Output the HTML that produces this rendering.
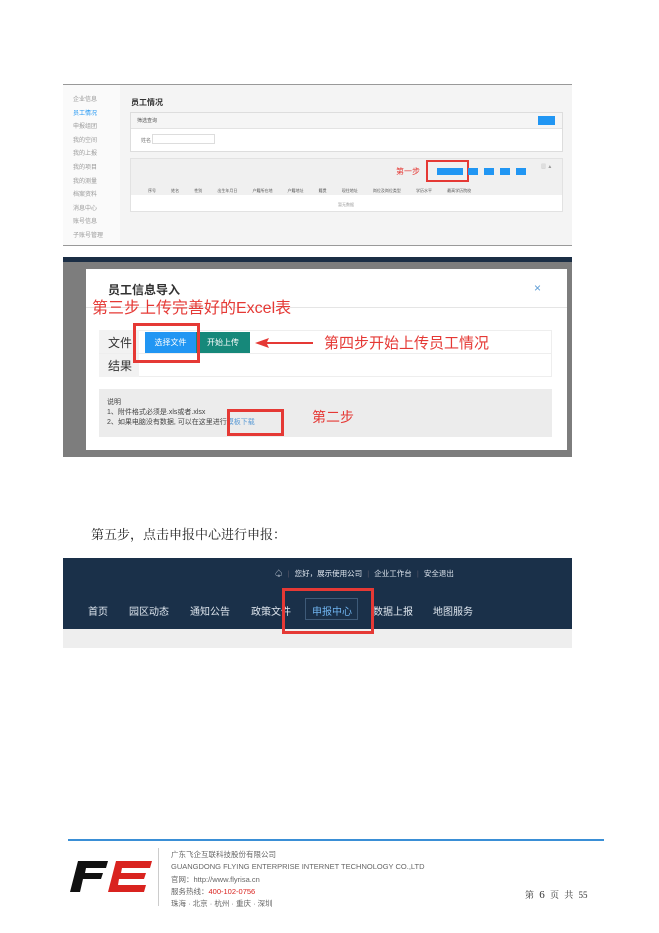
<!DOCTYPE html>
<html><head><meta charset="utf-8"><style>
*{margin:0;padding:0;box-sizing:border-box}
body{width:659px;height:933px;background:#fff;position:relative;overflow:hidden;font-family:"Liberation Sans","Noto Sans CJK SC",sans-serif}
.a{position:absolute;white-space:nowrap}
</style></head><body>

<!-- screenshot 1 -->
<div class="a" style="left:63px;top:84px;width:509px;height:162px;background:#f4f4f4;border-top:1px solid #999;border-bottom:1px solid #999"></div>
<div class="a" style="left:63px;top:85px;width:57px;height:160px;background:#fafafa"></div>
<div class="a" style="left:73px;top:94px;font-size:6px;line-height:13.6px;color:#999">企业信息<br><span style="color:#2196f3">员工情况</span><br>申报组团<br>我的空间<br>我的上报<br>我的项目<br>我的测量<br>档案资料<br>消息中心<br>账号信息<br>子账号管理</div>
<div class="a" style="left:131px;top:97px;font-size:8px;font-weight:bold;color:#333">员工情况</div>
<div class="a" style="left:130px;top:112px;width:433px;height:40px;background:#fff;border:1px solid #ddd"></div>
<div class="a" style="left:131px;top:113px;width:431px;height:16px;background:#f5f5f5;border-bottom:1px solid #e3e3e3"></div>
<div class="a" style="left:137px;top:117px;font-size:5px;color:#555">筛选查询</div>
<div class="a" style="left:538px;top:116px;width:17px;height:9px;background:#2196f3"></div>
<div class="a" style="left:141px;top:137px;font-size:5px;color:#777">姓名</div>
<div class="a" style="left:152px;top:134px;width:63px;height:10px;border:1px solid #ddd;background:#fff"></div>
<div class="a" style="left:130px;top:158px;width:433px;height:54px;background:#f0f0f0;border:1px solid #e2e2e2"></div>
<div class="a" style="left:131px;top:195px;width:431px;height:16px;background:#fff"></div>
<div class="a" style="left:396px;top:166px;font-size:8px;color:#e53935">第一步</div>
<div class="a" style="left:426px;top:160px;width:43px;height:22px;border:2px solid #e53935"></div>
<div class="a" style="left:437px;top:168px;width:26px;height:7px;background:#2196f3"></div>
<div class="a" style="left:468px;top:168px;width:10px;height:7px;background:#2196f3"></div>
<div class="a" style="left:484px;top:168px;width:10px;height:7px;background:#2196f3"></div>
<div class="a" style="left:500px;top:168px;width:10px;height:7px;background:#2196f3"></div>
<div class="a" style="left:516px;top:168px;width:10px;height:7px;background:#2196f3"></div>
<div class="a" style="left:541px;top:163px;font-size:5px;color:#999">▥ ▲</div>
<div class="a" style="left:148px;top:188px;font-size:4px;color:#555;word-spacing:14px">序号 姓名 性别 出生年月日 户籍所在地 户籍地址 籍贯 现住地址 岗位及岗位类型 学历水平 最高学历院校</div>
<div class="a" style="left:338px;top:202px;font-size:4px;color:#999">暂无数据</div>

<!-- screenshot 2 -->
<div class="a" style="left:63px;top:257px;width:509px;height:200px;background:#7d7d7d"></div>
<div class="a" style="left:63px;top:257px;width:509px;height:5px;background:#1b2e45"></div>
<div class="a" style="left:86px;top:269px;width:481px;height:181px;background:#fff"></div>
<div class="a" style="left:108px;top:281px;font-size:12px;font-weight:bold;color:#333">员工信息导入</div>
<div class="a" style="left:534px;top:281px;font-size:12px;color:#5b9bd5">×</div>
<div class="a" style="left:86px;top:307px;width:481px;height:1px;background:#e5e5e5"></div>
<div class="a" style="left:92px;top:294px;font-size:16px;color:#e53935">第三步上传完善好的Excel表</div>
<div class="a" style="left:99px;top:330px;width:453px;height:47px;border:1px solid #eee;background:#fff"></div>
<div class="a" style="left:99px;top:330px;width:40px;height:47px;background:#f2f2f2"></div>
<div class="a" style="left:99px;top:353px;width:453px;height:1px;background:#eee"></div>
<div class="a" style="left:108px;top:334px;font-size:12px;color:#333">文件</div>
<div class="a" style="left:108px;top:357px;font-size:12px;color:#333">结果</div>
<div class="a" style="left:145px;top:332px;width:51px;height:21px;background:#2196f3;color:#fff;font-size:8px;line-height:21px;text-align:center">选择文件</div>
<div class="a" style="left:196px;top:332px;width:54px;height:21px;background:#16887a;color:#fff;font-size:8px;line-height:21px;text-align:center">开始上传</div>
<div class="a" style="left:133px;top:323px;width:67px;height:40px;border:3px solid #e53935"></div>
<svg class="a" style="left:255px;top:338px" width="60" height="10"><polygon points="0,5 14,0 12,4 58,4 58,6 12,6 14,10" fill="#e53935"/></svg>
<div class="a" style="left:324px;top:332px;font-size:15px;color:#e53935">第四步开始上传员工情况</div>
<div class="a" style="left:99px;top:389px;width:453px;height:48px;background:#ececec"></div>
<div class="a" style="left:107px;top:398px;font-size:7px;line-height:10px;color:#444">说明<br>1、附件格式必须是.xls或者.xlsx<br>2、如果电脑没有数据, 可以在这里进行<span style="color:#5b9bd5">模板下载</span></div>
<div class="a" style="left:227px;top:409px;width:57px;height:27px;border:3px solid #e53935"></div>
<div class="a" style="left:312px;top:407px;font-size:14px;color:#e53935">第二步</div>

<!-- text -->
<div class="a" style="left:91px;top:524px;font-size:13px;color:#222;font-family:'Liberation Serif','Noto Serif CJK SC',serif">第五步，点击申报中心进行申报：</div>

<!-- screenshot 3 -->
<div class="a" style="left:63px;top:558px;width:509px;height:90px;background:#eeeeee"></div>
<div class="a" style="left:63px;top:558px;width:509px;height:71px;background:#1a3049"></div>
<div class="a" style="left:275px;top:568px;font-size:7.5px;color:#dfe6ee;word-spacing:3px">♤ <span style="color:#556">|</span> 您好，展示使用公司 <span style="color:#556">|</span> 企业工作台 <span style="color:#556">|</span> 安全退出</div>
<div class="a" style="left:88px;top:603px;font-size:10px;color:#dfe6ee">首页</div>
<div class="a" style="left:129px;top:603px;font-size:10px;color:#dfe6ee">园区动态</div>
<div class="a" style="left:190px;top:603px;font-size:10px;color:#dfe6ee">通知公告</div>
<div class="a" style="left:251px;top:603px;font-size:10px;color:#dfe6ee">政策文件</div>
<div class="a" style="left:305px;top:598px;width:53px;height:22px;border:1px solid #3e5a78"></div>
<div class="a" style="left:312px;top:603px;font-size:10px;color:#6fb3ee">申报中心</div>
<div class="a" style="left:373px;top:603px;font-size:10px;color:#dfe6ee">数据上报</div>
<div class="a" style="left:433px;top:603px;font-size:10px;color:#dfe6ee">地图服务</div>
<div class="a" style="left:282px;top:588px;width:92px;height:46px;border:3px solid #e53935"></div>

<!-- footer -->
<div class="a" style="left:68px;top:839px;width:536px;height:2px;background:#3a8fd6"></div>
<svg class="a" style="left:70px;top:861px" width="82" height="32">
<polygon points="8,0 38,0 36,7 16,7 15,12 33,12 31,18 13,18 10,31 0,31" fill="#111"/>
<polygon points="46,0 82,0 80,7 52,7 51,12 76,12 74,18 49,18 48,24 76,24 74,31 38,31" fill="#d9231f"/>
</svg>
<div class="a" style="left:158px;top:848px;width:1px;height:58px;background:#ccc"></div>
<div class="a" style="left:171px;top:849px;font-size:7.5px;line-height:12.3px;color:#666">广东飞企互联科技股份有限公司<br>GUANGDONG FLYING ENTERPRISE INTERNET TECHNOLOGY CO.,LTD<br>官网：http://www.flyrisa.cn<br>服务热线：<span style="color:#d9231f">400-102-0756</span><br>珠海 · 北京 · 杭州 · 重庆 · 深圳</div>
<div class="a" style="left:525px;top:888px;font-size:9px;color:#333;word-spacing:3px;font-family:'Liberation Serif','Noto Serif CJK SC',serif">第 <span style="font-size:11px">6</span> 页 共 55</div>
</body></html>
